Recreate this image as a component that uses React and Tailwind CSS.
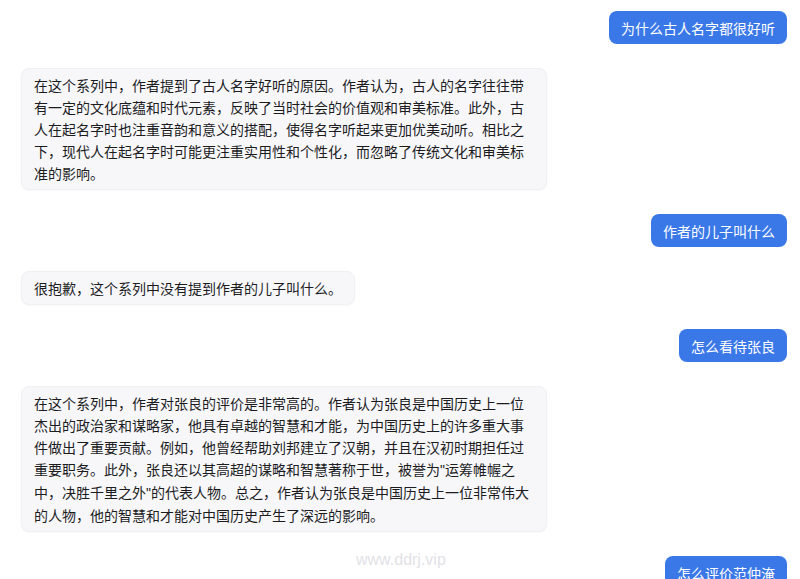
import React from "react";

function User({ children }) {
  return (
    <div className="flex justify-end">
      <div className="rounded-lg bg-[#3a78e8] px-3 py-[5.5px] text-[14px] leading-[22px] text-white">
        {children}
      </div>
    </div>
  );
}

function Bot({ children }) {
  return (
    <div className="flex justify-start">
      <div className="max-w-[526px] rounded-lg border border-[#efeff4] bg-[#f7f7fa] px-[12px] py-[5px] text-[14px] leading-[22px] text-[#1c1c1e] shadow-[0_1px_2px_rgba(0,0,0,0.03)]">
        {children}
      </div>
    </div>
  );
}

function Q() {
  return <span className="font-['Liberation_Sans',Arial,sans-serif]">"</span>;
}

export default function App() {
  return (
    <div className="relative h-[579px] w-[800px] overflow-hidden bg-white font-['Noto_Sans_CJK_SC','Noto_Sans',sans-serif]">
      <div className="flex flex-col gap-6 pl-[21px] pr-[13px] pt-[11px]">
        <User>为什么古人名字都很好听</User>
        <Bot>
          在这个系列中，作者提到了古人名字好听的原因。作者认为，古人的名字往往带有一定的文化底蕴和时代元素，反映了当时社会的价值观和审美标准。此外，古人在起名字时也注重音韵和意义的搭配，使得名字听起来更加优美动听。相比之下，现代人在起名字时可能更注重实用性和个性化，而忽略了传统文化和审美标准的影响。
        </Bot>
        <User>作者的儿子叫什么</User>
        <Bot>很抱歉，这个系列中没有提到作者的儿子叫什么。</Bot>
        <User>怎么看待张良</User>
        <Bot>
          在这个系列中，作者对张良的评价是非常高的。作者认为张良是中国历史上一位杰出的政治家和谋略家，他具有卓越的智慧和才能，为中国历史上的许多重大事件做出了重要贡献。例如，他曾经帮助刘邦建立了汉朝，并且在汉初时期担任过重要职务。此外，张良还以其高超的谋略和智慧著称于世，被誉为<Q />运筹帷幄之中，决胜千里之外<Q />的代表人物。总之，作者认为张良是中国历史上一位非常伟大的人物，他的智慧和才能对中国历史产生了深远的影响。
        </Bot>
        <User>怎么评价范仲淹</User>
      </div>
      <div className="absolute left-[356px] top-[550px] font-['Liberation_Sans',Arial,sans-serif] text-[16px] leading-[20px] text-[#e2e2e6]">
        www.ddrj.vip
      </div>
    </div>
  );
}
